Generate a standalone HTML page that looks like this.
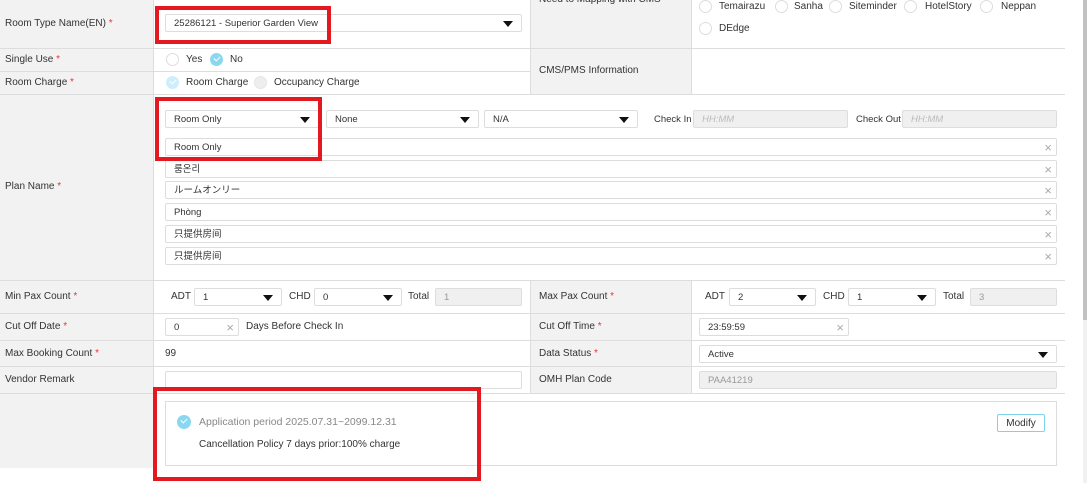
<!DOCTYPE html><html><head><meta charset="utf-8"><style>
body{margin:0;width:1087px;height:483px;overflow:hidden;background:#fff;font-family:"Liberation Sans","Noto Sans CJK SC",sans-serif;font-size:10px;color:#333;position:relative}
div,span{position:absolute;box-sizing:border-box}
.g{background:#f2f2f2}
.hl{height:1px;background:#ddd}
.vl{width:1px;background:#ddd}
.l{left:5px;line-height:12px}
.s{color:#e33}
.in{border:1px solid #ddd;border-radius:2px;background:#fff;height:18px;padding-left:8px;line-height:18px;font-size:9.5px}
.dis{background:#f0f0f0;color:#999}
.ar:after{content:"";position:absolute;right:8px;top:6px;border-left:5px solid transparent;border-right:5px solid transparent;border-top:6px solid #111}
.x:after{content:"×";position:absolute;right:4px;top:0;line-height:17px;color:#aaa;font-size:13px}
.r{width:13px;height:13px;border-radius:50%;border:1px solid #ddd;background:#fff}
.rg{background:#eee;border-color:#e6e6e6}
.rc{background:#8ad8f0;border-color:#8ad8f0}
.rl{background:#cdeefa;border-color:#cdeefa}
.rc:after,.rl:after{content:"";position:absolute;left:3px;top:2px;width:5px;height:3px;border-left:1.5px solid #fff;border-bottom:1.5px solid #fff;transform:rotate(-45deg)}
.t{line-height:12px}
.red{border:4px solid #e3191f}
</style></head><body>
<div class="g" style="left:0;top:0;width:153px;height:468px"></div>
<div class="g" style="left:530px;top:0;width:161px;height:94px"></div>
<div class="g" style="left:530px;top:280px;width:161px;height:113px"></div>
<div class="hl" style="left:0;top:48px;width:530px"></div>
<div class="hl" style="left:530px;top:48px;width:535px"></div>
<div class="hl" style="left:0;top:71px;width:530px"></div>
<div class="hl" style="left:0;top:94px;width:1065px"></div>
<div class="hl" style="left:0;top:280px;width:1065px"></div>
<div class="hl" style="left:0;top:313px;width:1065px"></div>
<div class="hl" style="left:0;top:340px;width:1065px"></div>
<div class="hl" style="left:0;top:366px;width:1065px"></div>
<div class="hl" style="left:0;top:393px;width:1065px"></div>
<div class="vl" style="left:153px;top:0;height:468px"></div>
<div class="vl" style="left:530px;top:0;height:94px"></div>
<div class="vl" style="left:691px;top:0;height:94px"></div>
<div class="vl" style="left:530px;top:280px;height:113px"></div>
<div class="vl" style="left:691px;top:280px;height:113px"></div>
<div style="left:1083px;top:0;width:4px;height:320px;background:#c1c1c1"></div>
<div style="left:1083px;top:320px;width:4px;height:163px;background:#f1f1f1"></div>
<div class="l" style="top:18px">Room Type Name(EN) <span class="s" style="position:static">*</span></div>
<div class="l" style="top:54px">Single Use <span class="s" style="position:static">*</span></div>
<div class="l" style="top:77px">Room Charge <span class="s" style="position:static">*</span></div>
<div class="l" style="top:181px">Plan Name <span class="s" style="position:static">*</span></div>
<div class="l" style="top:291px">Min Pax Count <span class="s" style="position:static">*</span></div>
<div class="l" style="top:321px">Cut Off Date <span class="s" style="position:static">*</span></div>
<div class="l" style="top:348px">Max Booking Count <span class="s" style="position:static">*</span></div>
<div class="l" style="top:374px">Vendor Remark</div>
<div class="t" style="left:539px;top:-6px">Need to Mapping with CMS</div>
<div class="t" style="left:539px;top:65px">CMS/PMS Information</div>
<div class="t" style="left:539px;top:291px">Max Pax Count <span class="s" style="position:static">*</span></div>
<div class="t" style="left:539px;top:321px">Cut Off Time <span class="s" style="position:static">*</span></div>
<div class="t" style="left:539px;top:348px">Data Status <span class="s" style="position:static">*</span></div>
<div class="t" style="left:539px;top:374px">OMH Plan Code</div>
<div class="in ar" style="left:165px;top:14px;width:357px">25286121 - Superior Garden View</div>
<div class="r" style="left:699px;top:0px"></div><div class="t" style="left:719px;top:1px">Temairazu</div>
<div class="r" style="left:775px;top:0px"></div><div class="t" style="left:794px;top:1px">Sanha</div>
<div class="r" style="left:829px;top:0px"></div><div class="t" style="left:849px;top:1px">Siteminder</div>
<div class="r" style="left:904px;top:0px"></div><div class="t" style="left:925px;top:1px">HotelStory</div>
<div class="r" style="left:980px;top:0px"></div><div class="t" style="left:1001px;top:1px">Neppan</div>
<div class="r" style="left:699px;top:22px"></div><div class="t" style="left:719px;top:23px">DEdge</div>
<div class="r" style="left:166px;top:53px"></div><div class="t" style="left:186px;top:54px">Yes</div>
<div class="r rc" style="left:210px;top:53px"></div><div class="t" style="left:230px;top:54px">No</div>
<div class="r rl" style="left:166px;top:76px"></div><div class="t" style="left:186px;top:77px">Room Charge</div>
<div class="r rg" style="left:254px;top:76px"></div><div class="t" style="left:274px;top:77px">Occupancy Charge</div>
<div class="in ar" style="left:165px;top:110px;width:154px">Room Only</div>
<div class="in ar" style="left:326px;top:110px;width:153px">None</div>
<div class="in ar" style="left:484px;top:110px;width:154px">N/A</div>
<div class="t" style="left:654px;top:114px;font-size:9.5px">Check In</div>
<div class="in dis" style="left:693px;top:110px;width:155px;font-style:italic;color:#bbb">HH:MM</div>
<div class="t" style="left:856px;top:114px;font-size:9.5px">Check Out</div>
<div class="in dis" style="left:902px;top:110px;width:155px;font-style:italic;color:#bbb">HH:MM</div>
<div class="in x" style="left:165px;top:138px;width:892px">Room Only</div>
<div class="in x" style="left:165px;top:160px;width:892px">룸온리</div>
<div class="in x" style="left:165px;top:181px;width:892px">ルームオンリー</div>
<div class="in x" style="left:165px;top:203px;width:892px">Phòng</div>
<div class="in x" style="left:165px;top:225px;width:892px">只提供房间</div>
<div class="in x" style="left:165px;top:247px;width:892px">只提供房间</div>
<div class="t" style="left:171px;top:291px">ADT</div>
<div class="in ar" style="left:194px;top:288px;width:88px">1</div>
<div class="t" style="left:289px;top:291px">CHD</div>
<div class="in ar" style="left:314px;top:288px;width:88px">0</div>
<div class="t" style="left:408px;top:291px">Total</div>
<div class="in dis" style="left:435px;top:288px;width:87px">1</div>
<div class="t" style="left:705px;top:291px">ADT</div>
<div class="in ar" style="left:729px;top:288px;width:87px">2</div>
<div class="t" style="left:823px;top:291px">CHD</div>
<div class="in ar" style="left:848px;top:288px;width:88px">1</div>
<div class="t" style="left:943px;top:291px">Total</div>
<div class="in dis" style="left:970px;top:288px;width:87px">3</div>
<div class="in x" style="left:165px;top:318px;width:74px">0</div>
<div class="t" style="left:246px;top:321px">Days Before Check In</div>
<div class="in x" style="left:699px;top:318px;width:150px">23:59:59</div>
<div class="t" style="left:165px;top:348px">99</div>
<div class="in ar" style="left:699px;top:345px;width:358px">Active</div>
<div class="in" style="left:165px;top:371px;width:357px"></div>
<div class="in dis" style="left:699px;top:371px;width:358px">PAA41219</div>
<div style="left:165px;top:401px;width:892px;height:65px;border:1px solid #ddd;background:#fff"></div>
<div class="r rc" style="left:177px;top:415px;width:14px;height:14px"></div>
<div class="t" style="left:199px;top:416px;color:#888;font-size:10.5px">Application period 2025.07.31~2099.12.31</div>
<div class="t" style="left:199px;top:439px">Cancellation Policy 7 days prior:100% charge</div>
<div style="left:997px;top:414px;width:48px;height:18px;border:1px solid #7dd3ec;border-radius:2px;text-align:center;line-height:17px;background:#fff">Modify</div>
<div class="red" style="left:155px;top:6px;width:176px;height:38px"></div>
<div class="red" style="left:155px;top:97px;width:167px;height:64px"></div>
<div class="red" style="left:153px;top:387px;width:328px;height:94px"></div>
</body></html>
